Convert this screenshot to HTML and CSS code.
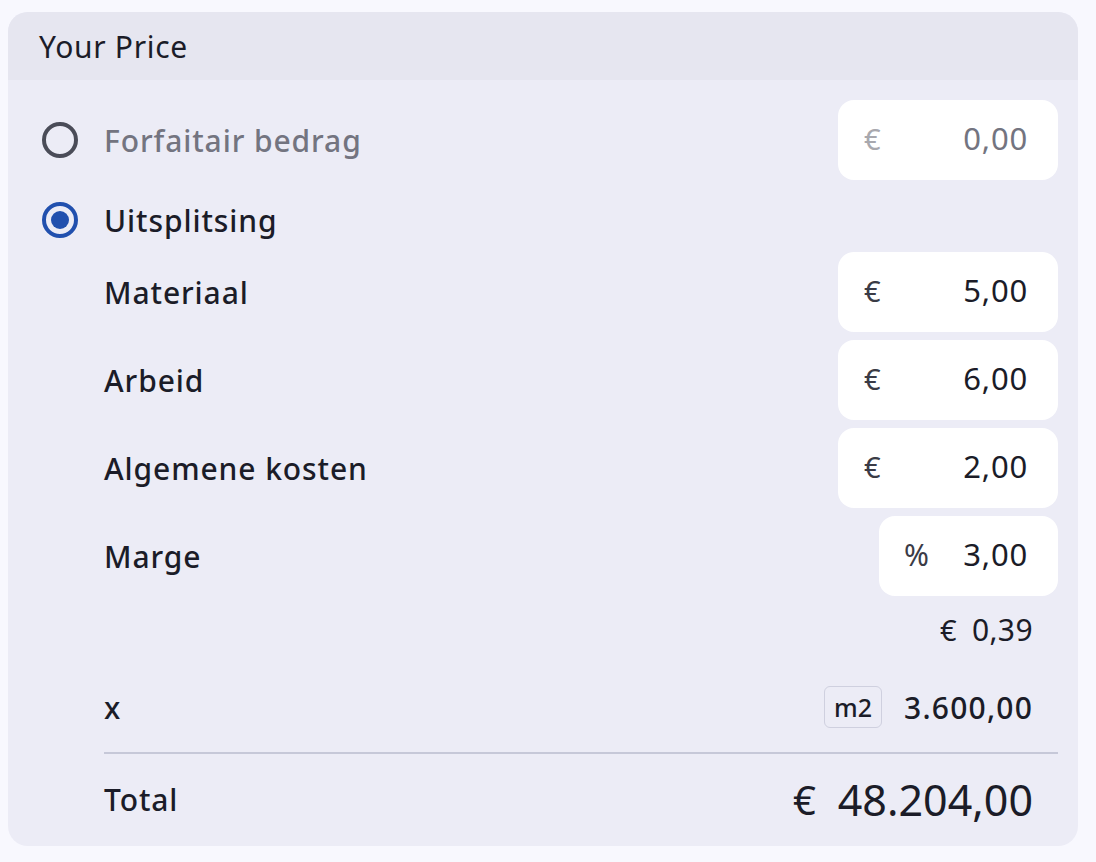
FILE: index.html
```html
<!DOCTYPE html>
<html lang="nl">
<head>
<meta charset="utf-8">
<title>Your Price</title>
<link rel="stylesheet" href="styles.css">
</head>
<body>
<section class="card">
  <header class="card-head">Your Price</header>
  <div class="card-body">
    <div class="row row-input">
      <label class="radio-line">
        <span class="radio"></span>
        <span class="label label-muted">Forfaitair bedrag</span>
      </label>
      <div class="field field-muted"><span class="unit">€</span><span class="val">0,00</span></div>
    </div>
    <div class="row row-radio">
      <label class="radio-line">
        <span class="radio radio-on"><span class="dot"></span></span>
        <span class="label">Uitsplitsing</span>
      </label>
    </div>
    <div class="row row-input sub">
      <span class="label">Materiaal</span>
      <div class="field"><span class="unit">€</span><span class="val">5,00</span></div>
    </div>
    <div class="row row-input sub">
      <span class="label">Arbeid</span>
      <div class="field"><span class="unit">€</span><span class="val">6,00</span></div>
    </div>
    <div class="row row-input sub">
      <span class="label">Algemene kosten</span>
      <div class="field"><span class="unit">€</span><span class="val">2,00</span></div>
    </div>
    <div class="row row-input sub">
      <span class="label">Marge</span>
      <div class="field field-narrow"><span class="unit">%</span><span class="val">3,00</span></div>
    </div>
    <div class="row row-sum sub">
      <span class="amount"><span class="cur">€</span><span>0,39</span></span>
    </div>
    <div class="row row-qty sub">
      <span class="label">x</span>
      <span class="qty"><span class="badge">m2</span><span class="qty-val">3.600,00</span></span>
    </div>
    <div class="divider"></div>
    <div class="row row-total sub">
      <span class="label">Total</span>
      <span class="total"><span class="cur-big">€</span><span>48.204,00</span></span>
    </div>
  </div>
</section>
</body>
</html>
```

FILE: styles.css
```css
* { box-sizing: border-box; }
html, body { margin: 0; }
body {
  background: #f8f8fe;
  font-family: "Noto Sans", "DejaVu Sans", sans-serif;
  color: #1b1c28;
  padding: 12px 18px 16px 8px;
}
.card {
  background: #ececf6;
  border-radius: 20px;
  overflow: hidden;
  height: 834px;
}
.card-head {
  background: #e6e6f0;
  height: 68px;
  padding-left: 31px;
  display: flex;
  align-items: center;
  font-size: 30px;
  font-weight: 400;
  color: #1b1c28;
  letter-spacing: 0.7px;
}
.card-body {
  padding: 20px 20px 0 34px;
  display: flex;
  flex-direction: column;
}
.row {
  display: flex;
  align-items: center;
  justify-content: space-between;
}
.row + .row { margin-top: 8px; }
.row-input { height: 80px; }
.row-radio { height: 64px; }
.row-radio + .row { margin-top: 0; }
.row-sum { height: 50px; justify-content: flex-end; padding-right: 25px; }
.row-qty { height: 90px; padding-right: 25px; }
.row-total { height: 90px; margin-top: 0 !important; padding-right: 25px; }
.sub { padding-left: 62px; }
.radio-line { display: flex; align-items: center; gap: 26px; }
.radio {
  width: 36px; height: 36px;
  border-radius: 50%;
  border: 4px solid #4a4c58;
  display: flex; align-items: center; justify-content: center;
}
.radio-on { border-color: #2150ae; }
.dot { width: 18px; height: 18px; border-radius: 50%; background: #2150ae; }
.label {
  font-size: 30px;
  font-weight: 500;
  letter-spacing: 0.9px;
  color: #1b1c28;
}
.label-muted { color: #737480; }
.field {
  width: 220px;
  height: 80px;
  background: #fff;
  border-radius: 16px;
  display: flex;
  align-items: center;
  justify-content: space-between;
  padding: 0 30px 4px 26px;
  font-size: 31px;
  letter-spacing: 0.8px;
  color: #1b1c28;
}
.field .unit { font-size: 29px; color: #3a3b46; letter-spacing: 0; }
.field-muted .unit { color: #a8a8ae; }
.field-muted .val { color: #737480; }
.field-narrow { width: 179px; padding-left: 25px; }
.field-narrow .unit { font-size: 30px; }
.amount { display: flex; gap: 15px; font-size: 30px; align-items: center; letter-spacing: 0.4px; }
.cur { font-size: 29px; }
.qty { display: flex; align-items: center; gap: 22px; }
.badge {
  width: 58px; height: 42px;
  border: 1px solid #cfd0df;
  border-radius: 6px;
  display: flex; align-items: center; justify-content: center;
  font-size: 25px;
  font-weight: 500;
}
.qty-val { font-size: 30px; font-weight: 500; letter-spacing: 1.2px; }
.divider {
  height: 2px;
  background: #c6c8d8;
  margin-left: 62px;
}
.total { display: flex; align-items: center; gap: 22px; font-size: 43px; }
.cur-big { font-size: 40px; }
```
